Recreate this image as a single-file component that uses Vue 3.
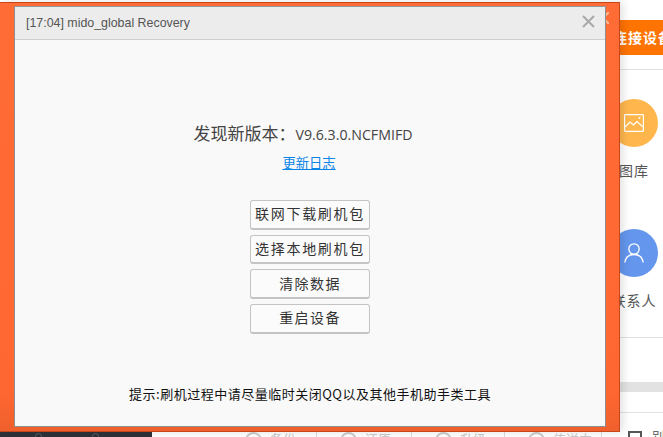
<script setup>
const actions = [
  { label: '联网下载刷机包', wide: true },
  { label: '选择本地刷机包', wide: true },
  { label: '清除数据', wide: false },
  { label: '重启设备', wide: false }
]
const tabs = [
  { label: '备份', w: 95 },
  { label: '还原', w: 95 },
  { label: '升级', w: 93 },
  { label: '传送中', w: 97 }
]
</script>

<template>
  <div class="desktop">
    <aside class="side">
      <div class="connect"><span>连接设备</span></div>
      <div class="rule rule-top"></div>
      <div class="tile tile-gallery">
        <div class="disc disc-amber">
          <svg width="20" height="18" viewBox="0 0 20 18" fill="none" stroke="#fff" stroke-width="1.2">
            <rect x="0.6" y="0.6" width="18.8" height="16.8" rx="0.8" />
            <path d="M1 13 L6 8 L9.5 11 L13 7.5 L19 13" />
            <circle cx="15.5" cy="4" r="1" fill="#fff" stroke="none" />
          </svg>
        </div>
        <span class="tile-label">图库</span>
      </div>
      <div class="tile tile-contacts">
        <div class="disc disc-blue">
          <svg width="20" height="20" viewBox="0 0 20 20" fill="none" stroke="#fff" stroke-width="1.3">
            <circle cx="10" cy="6" r="5.2" />
            <path d="M0.7 19.5 C1.5 14.5 5 11.5 10 11.5 C15 11.5 18.5 14.5 19.3 19.5" />
          </svg>
        </div>
        <span class="tile-label">联系人</span>
      </div>
      <div class="rule rule-mid"></div>
      <div class="band"></div>
      <div class="rule rule-low"></div>
    </aside>

    <footer class="taskbar">
      <div class="dark">
        <span class="dark-mark"></span>
        <span class="dark-mark"></span>
      </div>
      <div class="tabs">
        <div v-for="t in tabs" :key="t.label" class="tab" :style="{ width: t.w + 'px' }">
          <span class="tab-ring"></span>{{ t.label }}
        </div>
        <div class="tab-last">
          <span class="square"></span>别
        </div>
      </div>
    </footer>

    <div class="frame">
      <svg class="frame-x" width="12" height="12" viewBox="0 0 12 12" stroke="#ffb79c" stroke-width="2">
        <path d="M0 0 L12 12 M12 0 L0 12" />
      </svg>
      <section class="dialog">
        <header class="titlebar">
          <span class="title">[17:04] mido_global Recovery</span>
          <svg class="close" width="13" height="13" viewBox="0 0 13 13" stroke="#a9a9a9" stroke-width="2">
            <path d="M1 1 L12 12 M12 1 L1 12" />
          </svg>
        </header>
        <div class="body">
          <h1 class="version"><span class="cn">发现新版本：</span><span class="ver">V9.6.3.0.NCFMIFD</span></h1>
          <a class="log">更新日志</a>
          <div class="buttons">
            <button v-for="a in actions" :key="a.label" class="btn" :class="{ wide: a.wide }">{{ a.label }}</button>
          </div>
          <p class="hint">提示:刷机过程中请尽量临时关闭QQ以及其他手机助手类工具</p>
        </div>
      </section>
    </div>
  </div>
</template>

<style>
html, body { margin: 0; padding: 0; background: #fff; overflow: hidden; }
</style>

<style scoped>
.desktop {
  position: relative;
  width: 663px;
  height: 437px;
  overflow: hidden;
  background: #fff;
  font-family: "Liberation Sans", "Noto Sans CJK SC", sans-serif;
}
.side {
  position: absolute;
  left: 620px;
  top: 0;
  width: 43px;
  height: 437px;
}
.connect {
  position: absolute;
  left: -20px;
  top: 20px;
  width: 63px;
  height: 35px;
  box-sizing: border-box;
  padding-left: 13px;
  background: #ff7300;
  color: #fff;
  font: bold 14px/35px "Noto Sans CJK SC", sans-serif;
  letter-spacing: 1px;
  white-space: nowrap;
  overflow: hidden;
}
.rule { position: absolute; left: -20px; width: 63px; height: 1px; background: #e2e2e2; }
.rule-top { top: 69px; }
.rule-mid { top: 337px; }
.rule-low { top: 412px; }
.band { position: absolute; left: -20px; width: 63px; top: 382px; height: 10px; background: #e2e2e2; }
.tile { position: absolute; left: -10px; width: 48px; display: flex; flex-direction: column; align-items: center; }
.tile-gallery { top: 99px; }
.tile-contacts { top: 229px; }
.disc { flex: none; width: 48px; height: 48px; border-radius: 50%; display: flex; align-items: center; justify-content: center; }
.disc-amber { background: #ffb74d; }
.disc-blue { background: #6496ee; }
.tile-label { margin-top: 13px; font: 14px/20px "Noto Sans CJK SC", sans-serif; color: #555; letter-spacing: 1px; white-space: nowrap; }
.taskbar { position: absolute; left: 0; top: 431px; width: 663px; height: 6px; display: flex; }
.dark { flex: none; width: 152px; background: #2e3238; display: flex; gap: 50px; padding: 2px 0 0 35px; box-sizing: border-box; }
.dark-mark { width: 7px; height: 7px; box-sizing: border-box; border: 1px solid #5a5f66; border-radius: 50%; }
.tabs { flex: 1; min-width: 0; display: flex; padding-left: 70px; color: #c8c8c8; font: 13px/16px "Noto Sans CJK SC", sans-serif; }
.tab {
  flex: none;
  display: flex;
  gap: 8px;
  height: 6px;
  padding-left: 23px;
  overflow: hidden;
  border-right: 1px solid #ddd;
  box-sizing: border-box;
  white-space: nowrap;
}
.tab-ring { flex: none; width: 17px; height: 17px; box-sizing: border-box; border: 2px solid #ccc; border-radius: 50%; margin-top: 1px; }
.tab-last { flex: none; display: flex; gap: 10px; margin-left: 26px; color: #666; margin-top: -3px; overflow: hidden; height: 9px; }
.square { flex: none; width: 14px; height: 14px; box-sizing: border-box; border: 2px solid #555; margin-top: 3px; }
.frame {
  position: absolute;
  left: 0;
  top: 2px;
  width: 620px;
  height: 430px;
  box-sizing: border-box;
  padding: 3px 13px 4px 14px;
  background: linear-gradient(180deg, #ff6c35, #ff6732 90%, #f0602c);
  border: 1px solid #c8461a;
  border-left: 0;
  box-shadow: 3px 0 8px rgba(0, 0, 0, 0.12);
}
.frame-x { position: absolute; left: 597px; top: 9px; }
.dialog {
  position: relative;
  box-sizing: border-box;
  height: 100%;
  display: flex;
  flex-direction: column;
  background: #f9f9f9;
  border: 1px solid #8e8e8e;
  border-top-color: #8e9aa0;
}
.titlebar {
  flex: none;
  height: 33px;
  box-sizing: border-box;
  display: flex;
  align-items: center;
  justify-content: space-between;
  padding: 0 10px 0 11px;
  background: #ececec;
  border-bottom: 1px solid #cfcfcf;
}
.title { font-size: 12.4px; color: #555; }
.close { margin-top: -3px; }
.body {
  flex: 1;
  display: flex;
  flex-direction: column;
  align-items: center;
  min-height: 0;
}
.version {
  margin: 81px 14px 0 0;
  font: 400 17px/24px "Noto Sans CJK SC", sans-serif;
  color: #444;
}
.ver { font: 14.2px/24px "Open Sans", sans-serif; }
.log {
  margin-top: 7px;
  margin-right: 2px;
  font: 13.3px/18px "Noto Sans CJK SC", sans-serif;
  color: #0a84e6;
  text-decoration: underline;
}
.buttons { margin-top: 28px; display: flex; flex-direction: column; gap: 5px; }
.btn {
  width: 120px;
  height: 29.67px;
  padding: 0 0 2px;
  box-sizing: border-box;
  background: #fbfbfb;
  border: 1px solid #c4c4c4;
  border-bottom-width: 2px;
  border-radius: 3px;
  font: 14px/24px "Noto Sans CJK SC", sans-serif;
  color: #333;
  letter-spacing: 1.4px;
  white-space: nowrap;
}
.btn.wide { letter-spacing: 1.7px; }
.hint {
  margin: 51px 0 0;
  font: 13px/18px "Noto Sans CJK SC", sans-serif;
  letter-spacing: 0.5px;
  color: #111;
  white-space: nowrap;
}
</style>
